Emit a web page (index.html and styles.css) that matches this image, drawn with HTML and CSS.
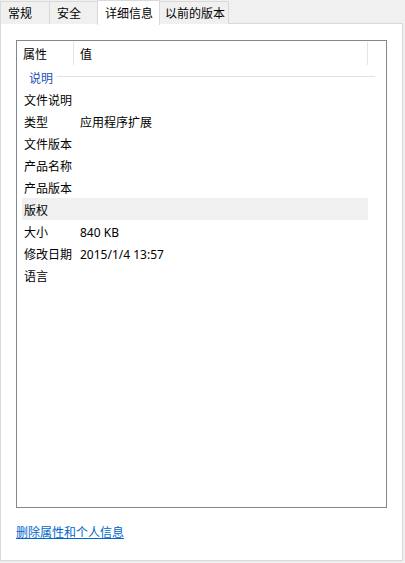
FILE: index.html
```html
<!DOCTYPE html>
<html lang="zh-CN">
<head>
    <meta charset="UTF-8">
    <meta name="viewport" content="width=device-width, initial-scale=1.0">
    <title>详细信息</title>
    <link rel="stylesheet" href="styles.css">
</head>
<body>

    <div class="tabs">
        <div class="tab">常规</div>
        <div class="tab">安全</div>
        <div class="tab active">详细信息</div>
        <div class="tab">以前的版本</div>
    </div>

    <div class="panel">
        <div class="listbox">
            <div class="list-head">
                <div class="head-col name">属性</div>
                <div class="head-col value">值</div>
            </div>

            <div class="group">
                <span class="group-title">说明</span>
                <span class="group-line"></span>
            </div>

            <div class="row"><span class="key">文件说明</span><span class="val"></span></div>
            <div class="row"><span class="key">类型</span><span class="val">应用程序扩展</span></div>
            <div class="row"><span class="key">文件版本</span><span class="val"></span></div>
            <div class="row"><span class="key">产品名称</span><span class="val"></span></div>
            <div class="row"><span class="key">产品版本</span><span class="val"></span></div>
            <div class="row selected"><span class="key">版权</span><span class="val"></span></div>
            <div class="row"><span class="key">大小</span><span class="val">840 KB</span></div>
            <div class="row"><span class="key">修改日期</span><span class="val">2015/1/4 13:57</span></div>
            <div class="row"><span class="key">语言</span><span class="val"></span></div>
        </div>

        <a class="remove-link" href="#">删除属性和个人信息</a>
    </div>

</body>
</html>
```

FILE: styles.css
```css
body {
    margin: 0;
    background: #f0f0f0;
    font-family: "Noto Sans", "Noto Sans CJK SC", sans-serif;
    font-size: 12px;
    color: #000;
}
.tabs {
    display: flex;
    height: 24px;
    position: relative;
    z-index: 1;
    margin-bottom: -1px;
}
.tab {
    box-sizing: border-box;
    height: 23px;
    margin-top: 1px;
    padding: 1px 7px 0;
    line-height: 22px;
    background: #f0f0f0;
    border: 1px solid #d9d9d9;
    border-bottom: none;
    margin-right: -1px;
    white-space: nowrap;
}
.tab:first-child { width: 50px; }
.tab:nth-child(2) { width: 49px; }
.tab.active {
    width: 63px;
    height: 25px;
    margin-top: 0;
    line-height: 24px;
    background: #fff;
    position: relative;
    z-index: 2;
}
.tab:last-child { width: 70px; padding-left: 5px; }
.panel {
    box-sizing: border-box;
    width: 403px;
    height: 538px;
    background: #fff;
    border: 1px solid #d9d9d9;
    padding: 16px 0 0 15px;
}
.listbox {
    box-sizing: border-box;
    width: 371px;
    height: 468px;
    border: 1px solid #828790;
}
.list-head {
    display: flex;
    height: 24px;
}
.head-col {
    box-sizing: border-box;
    height: 23px;
    margin-top: 1px;
    padding-top: 2px;
    line-height: 22px;
    border-right: 1px solid #e5e5e5;
    padding-left: 6px;
}
.head-col.name { width: 57px; }
.head-col.value { width: 294px; }
.group {
    display: flex;
    align-items: center;
    height: 23px;
    padding-left: 12px;
}
.group-title {
    color: #1e50b4;
    margin-right: 4px;
    padding-top: 2px;
}
.group-line {
    width: 318px;
    height: 1px;
    background: #dde3ec;
}
.row {
    box-sizing: border-box;
    display: flex;
    width: 346px;
    height: 22px;
    padding-top: 2px;
    line-height: 22px;
    margin-left: 5px;
}
.row.selected { background: #f0f0f0; }
.key {
    width: 56px;
    padding-left: 2px;
}
.remove-link {
    display: inline-block;
    margin-top: 15px;
    color: #0066cc;
    text-decoration: underline;
}
```
